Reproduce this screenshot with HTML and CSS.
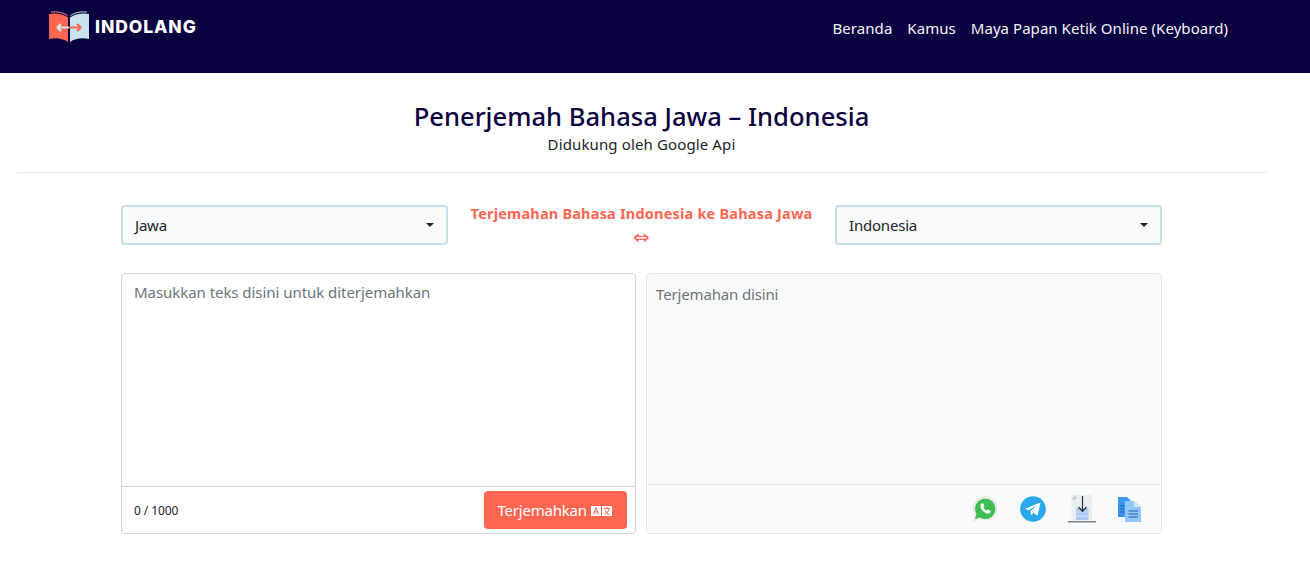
FILE: index.html
```html
<!DOCTYPE html>
<html>
<head>
  <meta charset="utf-8">
  <title>Penerjemah Bahasa Jawa - Indonesia</title>
  <link rel="stylesheet" href="styles.css">
</head>
<body>
  <header class="topbar">
    <a class="brand" href="#">
      <svg class="brand-logo" width="42" height="32" viewBox="0 0 42 32">
        <path d="M1 3C8 1.500 15 3 20 6.500V31C15 27.500 8 26.500 1 28Z" fill="#ff6651"/>
        <path d="M41 3C34 1.500 27 3 22 6.500V31C27 27.500 34 26.500 41 28Z" fill="#c9e4ee"/>
        <path d="M3 1.200C9 .2 15 1.500 19.500 4.500" fill="none" stroke="#ff8a78" stroke-width="1"/>
        <path d="M39 1.200C33 .2 27 1.500 22.500 4.500" fill="none" stroke="#c9e4ee" stroke-width="1"/>
        <path d="M9 16.500H21M9 16.500l4-3.500M9 16.500l4 3.500" fill="none" stroke="#dbe6e8" stroke-width="2.200"/>
        <path d="M21 16.500H33M33 16.500l-4-3.500M33 16.500l-4 3.500" fill="none" stroke="#ff6651" stroke-width="2.200"/>
      </svg>
      <span class="brand-name">INDOLANG</span>
    </a>
    <nav class="topnav">
      <a href="#">Beranda</a>
      <a href="#">Kamus</a>
      <a href="#">Maya Papan Ketik Online (Keyboard)</a>
    </nav>
  </header>

  <main class="page">
    <section class="heading">
      <h1>Penerjemah Bahasa Jawa – Indonesia</h1>
      <p>Didukung oleh Google Api</p>
    </section>
    <hr class="rule">

    <section class="translator">
      <div class="lang-row">
        <div class="select"><span>Jawa</span><i class="caret"></i></div>
        <div class="direction">
          <b>Terjemahan Bahasa Indonesia ke Bahasa Jawa</b>
          <span class="swap">⇔</span>
        </div>
        <div class="select"><span>Indonesia</span><i class="caret"></i></div>
      </div>

      <div class="panes">
        <div class="pane">
          <div class="pane-body source">Masukkan teks disini untuk diterjemahkan</div>
          <div class="pane-foot source-foot">
            <span class="count">0 / 1000</span>
            <button class="translate" type="button">Terjemahkan
              <svg width="21" height="10" viewBox="0 0 21 10">
                <rect width="10" height="10" fill="#fff"/>
                <rect x="11" width="10" height="10" fill="#fff"/>
                <path d="M2.500 8.500L5 1.500L7.500 8.500M3.500 6H6.500" fill="none" stroke="#ff6651" stroke-width="1"/>
                <path d="M13 2.500H19M16 1V3M13.500 8.500C16 7.500 17.500 5.500 18 3M14 4C15 6.500 16.500 7.800 18.500 8.500" fill="none" stroke="#ff6651" stroke-width="1"/>
              </svg>
            </button>
          </div>
        </div>

        <div class="pane result">
          <div class="pane-body target">Terjemahan disini</div>
          <div class="pane-foot target-foot">
            <svg width="26" height="26" viewBox="0 0 26 26">
              <path d="M.5 25.500L2.500 18.500A12.300 12.300 0 1 1 7.500 23.200Z" fill="#e4ebe4"/>
              <path d="M3 23L4.500 17.800A10 10 0 1 1 8 21.500Z" fill="#3ebd52"/>
              <circle cx="13.200" cy="12.500" r="9.800" fill="#3ebd52"/>
              <path d="M9.500 7.500C8 9 8 11.500 10.500 14.500C13 17.500 16 18.500 18 17C19 16 18.800 15 18.500 14.800L16 13.500L14.800 14.800C13.500 14.300 12 12.800 11.500 11.500L12.500 10.200L11.300 7.500C11 7 10 7 9.500 7.500Z" fill="#fff"/>
            </svg>
            <svg width="26" height="26" viewBox="0 0 26 26">
              <circle cx="13" cy="13" r="12.800" fill="#29a9ea"/>
              <path d="M5 12.800L20.500 6.500L17.500 19.800L13.500 16.800L11 19.300L10.500 15.200L17 9L8.800 14.300Z" fill="#fff"/>
            </svg>
            <svg width="28" height="28" viewBox="0 0 28 28">
              <path d="M3.500 0H24V25.500H3.500V4.500Z" fill="#e9eef0"/>
              <path d="M3.500 4.500L8 0V4.500Z" fill="#c4c9cc"/>
              <rect x="8" y="13" width="12.500" height="12" fill="#a9c8f2"/>
              <path d="M8 17H20.500M8 21H20.500" stroke="#e9eef0" stroke-width=".8"/>
              <path d="M14.500 1V16M10.500 12L14.500 16.500L18.500 12" fill="none" stroke="#26303a" stroke-width="1.200"/>
              <rect y="26" width="28" height="1.500" fill="#7d8184"/>
            </svg>
            <svg width="23" height="27" viewBox="0 0 23 27">
              <path d="M0 1H9L14 6V21H0Z" fill="#3d94f2"/>
              <path d="M7 5H16L23 11V26H7Z" fill="#90c6fa"/>
              <path d="M16 5V11H23Z" fill="#cfe6fc"/>
              <path d="M2 10H6M2 13H6M2 16H6M10.500 15H20M10.500 18H20M10.500 21H20" stroke="#1f5fae" stroke-width="1"/>
            </svg>
          </div>
        </div>
      </div>
    </section>
  </main>
</body>
</html>
```

FILE: styles.css
```css
* {
  box-sizing: border-box;
}
body {
  margin: 0;
  background: #fff;
  color: #212529;
  font-family: "Noto Sans", "Open Sans", sans-serif;
  font-size: 16px;
}
a {
  color: inherit;
  text-decoration: none;
}

.topbar {
  height: 73px;
  padding: 10px 82px 0 48px;
  display: flex;
  justify-content: space-between;
  background: #0a0140;
}
.brand {
  display: flex;
  align-items: flex-start;
  gap: 5px;
}
.brand-logo {
  margin-top: 1px;
}
.brand-name {
  margin-top: 7px;
  color: #fff;
  font-family: "Inter", sans-serif;
  font-size: 17.500px;
  font-weight: 800;
  line-height: 20px;
  letter-spacing: .9px;
}
.topnav {
  display: flex;
  gap: 15px;
  padding-top: 6px;
  color: #f4f4f8;
  font-size: 15px;
  line-height: 24px;
  letter-spacing: .05px;
}

.page {
  width: 1283px;
  padding-top: 26px;
}
.heading {
  text-align: center;
}
.heading h1 {
  margin: 0;
  color: #0a0140;
  font-size: 25.600px;
  font-weight: 500;
  line-height: 36px;
}
.heading p {
  margin: -1px 0 0;
  font-size: 15px;
  line-height: 20px;
  letter-spacing: .13px;
}
.rule {
  width: 1250px;
  margin: 18px 0 0 17px;
  border: 0;
  border-top: 1px solid #e3e5e8;
}

.translator {
  width: 1041px;
  margin: 32px auto 0;
}
.lang-row {
  display: flex;
  justify-content: space-between;
  align-items: flex-start;
}
.select {
  width: 327px;
  height: 40px;
  padding: 0 12px;
  display: flex;
  justify-content: space-between;
  align-items: center;
  border: 2px solid #c5e0ea;
  border-radius: 4px;
  background: #f8fafc;
  font-size: 15px;
  letter-spacing: -.2px;
}
.caret {
  border-top: 4px solid #212529;
  border-left: 4px solid transparent;
  border-right: 4px solid transparent;
}
.direction {
  width: 387px;
  display: flex;
  flex-direction: column;
  align-items: center;
  color: #ff6651;
  font-size: 14.500px;
  line-height: 24px;
  letter-spacing: .2px;
}
.direction b {
  margin-top: -4px;
  white-space: nowrap;
}
.swap {
  font-family: "DejaVu Sans", sans-serif;
  font-size: 20px;
  font-weight: 400;
}

.panes {
  margin-top: 24px;
  display: flex;
  justify-content: space-between;
}
.pane {
  width: 515px;
  height: 261px;
  display: flex;
  flex-direction: column;
  border: 1px solid #ced4da;
  border-radius: 4px;
}
.pane-body {
  flex: 1;
  color: #6c757d;
  font-size: 15px;
}
.pane-foot {
  display: flex;
  align-items: center;
  border-top: 1px solid #ced4da;
}
.source {
  padding: 8px 12px;
  letter-spacing: -.05px;
}
.source-foot {
  height: 47px;
  padding: 0 8px 0 12px;
  justify-content: space-between;
}
.count {
  font-size: 12px;
  letter-spacing: -.1px;
}
.translate {
  width: 143px;
  height: 38px;
  padding: 0 2px 0 0;
  border: 0;
  border-radius: 4px;
  background: #ff6651;
  color: #fff;
  font-family: inherit;
  font-size: 15px;
  letter-spacing: -.2px;
}
.result {
  width: 516px;
  background: #f9fafc;
  border-color: #e3e5e8;
}
.target {
  padding: 10px 9px;
  letter-spacing: -.15px;
}
.target-foot {
  height: 49px;
  padding: 0 20px 0 0;
  justify-content: flex-end;
  gap: 22px;
  border-color: #e3e5e8;
}
```
